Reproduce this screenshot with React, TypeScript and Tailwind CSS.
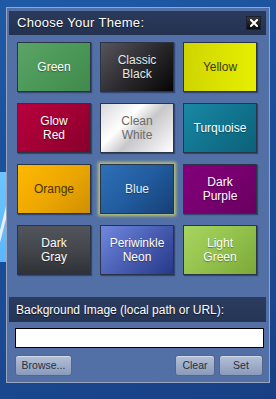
import React from "react";

type Theme = {
  lines: string[];
  bg: string;
  text: string;
  selected?: boolean;
};

const themes: Theme[] = [
  { lines: ["Green"], bg: "bg-[linear-gradient(135deg,#5aa565_0%,#4c9858_50%,#3f8a4c_100%)]", text: "text-white" },
  { lines: ["Classic", "Black"], bg: "bg-[linear-gradient(135deg,#55555c_0%,#2c2c30_50%,#050505_100%)]", text: "text-[#e8e8e8]" },
  { lines: ["Yellow"], bg: "bg-[linear-gradient(90deg,#cfd400_0%,#dbe200_50%,#e6ee00_100%)]", text: "text-[#3a3a10]" },
  { lines: ["Glow", "Red"], bg: "bg-[linear-gradient(135deg,#b8003c_0%,#a20035_50%,#86002c_100%)]", text: "text-white" },
  { lines: ["Clean", "White"], bg: "bg-[linear-gradient(135deg,#d8d8dc_0%,#ffffff_35%,#c8c8cc_55%,#ffffff_100%)]", text: "text-[#6a6a6a]" },
  { lines: ["Turquoise"], bg: "bg-[linear-gradient(135deg,#1a88a4_0%,#11748f_50%,#0b6178_100%)]", text: "text-white" },
  { lines: ["Orange"], bg: "bg-[linear-gradient(135deg,#ffb800_0%,#eda800_50%,#cf9000_100%)]", text: "text-[#4a3200]" },
  { lines: ["Blue"], bg: "bg-[linear-gradient(135deg,#2e70b8_0%,#215c9e_50%,#173f76_100%)]", text: "text-[#e4ecf4]", selected: true },
  { lines: ["Dark", "Purple"], bg: "bg-[linear-gradient(135deg,#82007a_0%,#78006f_50%,#680060_100%)]", text: "text-white" },
  { lines: ["Dark", "Gray"], bg: "bg-[linear-gradient(180deg,#52565c_0%,#43474c_50%,#2e3135_100%)]", text: "text-white" },
  { lines: ["Periwinkle", "Neon"], bg: "bg-[linear-gradient(135deg,#7088de_0%,#4a5fb4_50%,#263888_100%)]", text: "text-white" },
  { lines: ["Light", "Green"], bg: "bg-[linear-gradient(135deg,#a8d460_0%,#92c24c_50%,#7ca83a_100%)]", text: "text-white" },
];

const Tile = ({ t }: { t: Theme }) => (
  <div
    className={`h-[50px] flex flex-col items-center justify-center border border-[#2a3348] text-[12px] leading-[14px] ${t.bg} ${t.text} ${
      t.selected
        ? "shadow-[0_0_3px_2px_rgba(200,210,110,0.85)]"
        : "shadow-[1px_1px_1px_rgba(20,30,60,0.5)]"
    } ${t.text === "text-[#3a3a10]" || t.text === "text-[#4a3200]" || t.text === "text-[#6a6a6a]" ? "" : "[text-shadow:0_1px_1px_rgba(0,0,0,0.35)]"}`}
  >
    {t.lines.map((l) => (
      <span key={l}>{l}</span>
    ))}
  </div>
);

const Btn = ({ label, w }: { label: string; w: string }) => (
  <button
    className={`${w} h-[21px] rounded-[3px] border border-[#56658a] bg-[linear-gradient(180deg,#b4c0d8_0%,#9eadc9_50%,#8a9aba_100%)] text-[10.5px] text-[#2a2f3c] shadow-[inset_0_1px_0_rgba(255,255,255,0.45)]`}
  >
    {label}
  </button>
);

const App = () => {
  return (
    <div
      className="relative w-[276px] h-[399px] overflow-hidden bg-[linear-gradient(160deg,#1f5aa6_0%,#1a4d98_45%,#1b4a92_70%,#183f84_100%)]"
      style={{ fontFamily: '"Liberation Sans", Arial, sans-serif' }}
    >
      {/* wallpaper streak at left */}
      <div className="absolute left-0 top-[172px] w-[8px] h-[90px] bg-[linear-gradient(180deg,#6ec4ff_0%,#5ab6ff_100%)]" />
      <div className="absolute left-[2px] top-[185px] w-[3px] h-[75px] bg-[#e6eef6] rotate-[14deg]" />

      <div className="relative mt-[7px] ml-[6px] w-[264px] h-[376px] border border-[#9aa6bd] bg-[#5270a6] pt-[3px] pl-[2px] pr-[3px] flex flex-col">
        <div className="h-[24px] flex items-center justify-between bg-[linear-gradient(180deg,#2a3a5c_0%,#243250_100%)] pl-[8px] pr-[5px]">
          <span className="text-[13px] text-white tracking-[0.3px] [text-shadow:0_1px_1px_rgba(0,0,0,0.6)]">
            Choose Your Theme:
          </span>
          <div className="w-[15px] h-[14px] flex items-center justify-center bg-[linear-gradient(180deg,#3a3a3a_0%,#0a0a0a_100%)] border border-[#1a2030]">
            <svg width="8" height="8" viewBox="0 0 8 8">
              <path d="M1 1 L7 7 M7 1 L1 7" stroke="white" strokeWidth="2" strokeLinecap="square" />
            </svg>
          </div>
        </div>

        <div className="mt-[7px] pl-[8px] grid grid-cols-[74px_74px_74px] gap-x-[9px] gap-y-[11px]">
          {themes.map((t) => (
            <Tile key={t.lines.join(" ")} t={t} />
          ))}
        </div>

        <div className="mt-[22px] h-[25px] flex items-center bg-[linear-gradient(180deg,#2c3c60_0%,#263554_100%)] pl-[7px]">
          <span className="text-[12px] text-white [text-shadow:0_1px_1px_rgba(0,0,0,0.6)]">
            Background Image (local path or URL):
          </span>
        </div>

        <div className="mt-[6px] ml-[6px] mr-[2px] h-[20px] bg-white border border-black" />

        <div className="mt-[7px] ml-[6px] mr-[3px] flex items-center">
          <Btn label="Browse..." w="w-[57px]" />
          <div className="flex-1" />
          <Btn label="Clear" w="w-[40px]" />
          <div className="w-[4px]" />
          <Btn label="Set" w="w-[44px]" />
        </div>
      </div>
    </div>
  );
};

export default App;
